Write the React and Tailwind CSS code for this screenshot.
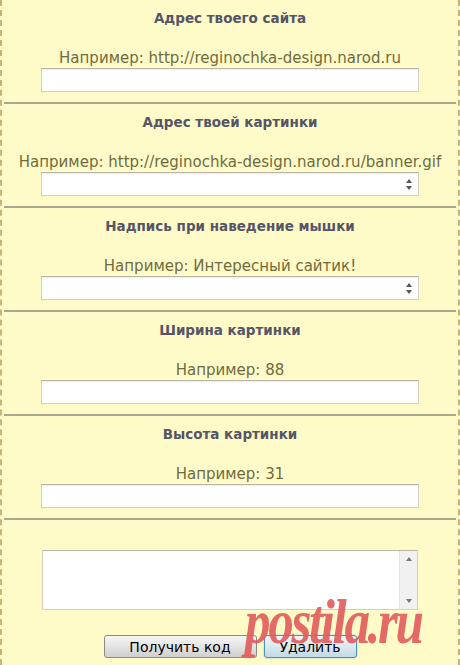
import React from 'react';

const fields = [
  { title: 'Адрес твоего сайта', hint: 'Например: http://reginochka-design.narod.ru', spin: false },
  { title: 'Адрес твоей картинки', hint: 'Например: http://reginochka-design.narod.ru/banner.gif', spin: true },
  { title: 'Надпись при наведение мышки', hint: 'Например: Интересный сайтик!', spin: true },
  { title: 'Ширина картинки', hint: 'Например: 88', spin: false },
  { title: 'Высота картинки', hint: 'Например: 31', spin: false },
];

const Arrows = () => (
  <div className="absolute right-[6px] top-0 bottom-0 flex flex-col items-center justify-center gap-[3px]">
    <span className="block w-0 h-0 border-l-[3px] border-r-[3px] border-b-[4px] border-l-transparent border-r-transparent border-b-[#555]" />
    <span className="block w-0 h-0 border-l-[3px] border-r-[3px] border-t-[4px] border-l-transparent border-r-transparent border-t-[#555]" />
  </div>
);

const Field = ({ title, hint, spin }) => (
  <div className="flex flex-col items-center pt-[10px] pb-[10px] border-b-2 border-[#a9a78e]">
    <div className="text-[13.5px] leading-[16px] font-bold text-[#555565]">{title}</div>
    <div className="mt-[23px] text-[15px] leading-[18px] text-[#6f6b3e] whitespace-nowrap">{hint}</div>
    <div className="relative mt-[1px] w-[378px] h-[24px] bg-white border border-[#d2d0c0] border-t-[#b9b7a8] shadow-[inset_0_1px_1px_rgba(0,0,0,0.08)]">
      {spin && <Arrows />}
    </div>
  </div>
);

export default function App() {
  return (
    <div className="relative w-[460px] h-[665px] overflow-hidden bg-[#fefbc9] border-l-2 border-r-2 border-dashed border-[#c9b477] font-['DejaVu_Sans',sans-serif]">
      <div className="flex flex-col px-[2px]">
        {fields.map((f) => (
          <Field key={f.title} {...f} />
        ))}
        <div className="flex flex-col items-center pt-[30px]">
          <div className="relative w-[376px] h-[60px] bg-white border border-[#d2d0c0] border-t-[#b9b7a8]">
            <div className="absolute right-0 top-0 bottom-0 w-[18px] bg-[#f1f1f1] border-l border-[#e4e4e4] flex flex-col items-center justify-between py-[6px]">
              <span className="block w-0 h-0 border-l-[3px] border-r-[3px] border-b-[4px] border-l-transparent border-r-transparent border-b-[#777]" />
              <span className="block w-0 h-0 border-l-[3px] border-r-[3px] border-t-[4px] border-l-transparent border-r-transparent border-t-[#777]" />
            </div>
          </div>
          <div className="flex gap-[7px] mt-[25px] text-[14px] text-black">
            <button className="w-[153px] h-[23px] rounded-[3px] border border-[#8a8a8a] bg-gradient-to-b from-[#f6f6f6] via-[#e4e4e4] to-[#cfcfcf] leading-[20px]">
              Получить код
            </button>
            <button className="w-[93px] h-[23px] rounded-[3px] border border-[#4f8fb0] bg-gradient-to-b from-[#eef6fa] via-[#dbe9f0] to-[#c2d9e5] shadow-[0_0_2px_#7fc0dc] leading-[20px]">
              Удалить
            </button>
          </div>
        </div>
      </div>
      <div className="absolute left-[243px] top-[582px] text-[64px] leading-[80px] font-bold italic text-[#e25b5b] opacity-90 tracking-[-3px] scale-x-[0.8] origin-left font-['Liberation_Serif',serif] pointer-events-none">
        postila.ru
      </div>
    </div>
  );
}
